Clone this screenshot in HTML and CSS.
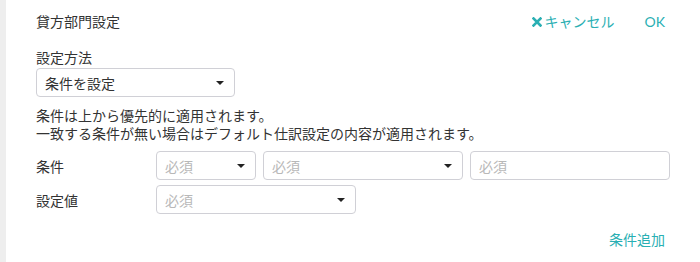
FILE: index.html
```html
<!DOCTYPE html>
<html lang="ja">
<head>
  <meta charset="UTF-8" />
  <title>貸方部門設定</title>
  <link rel="stylesheet" href="styles.css">
</head>
<body>
  <div class="sidebar"></div>
  <div class="panel">
    <div class="header">
      <div class="title">貸方部門設定</div>
      <div class="actions">
        <span class="link cancel">
          <svg width="10" height="10" viewBox="0 0 10 10"><path d="M1.5 1.5L8.5 8.5M8.5 1.5L1.5 8.5" stroke="#2aafb3" stroke-width="2.6" stroke-linecap="square"/></svg>
          キャンセル
        </span>
        <span class="link">OK</span>
      </div>
    </div>

    <div class="field-label">設定方法</div>
    <div class="select wide">
      <span>条件を設定</span>
      <span class="caret"></span>
    </div>

    <div class="note">
      条件は上から優先的に適用されます。<br>
      一致する条件が無い場合はデフォルト仕訳設定の内容が適用されます。
    </div>

    <div class="row">
      <div class="row-label">条件</div>
      <div class="select small placeholder">
        <span>必須</span>
        <span class="caret"></span>
      </div>
      <div class="select medium placeholder">
        <span>必須</span>
        <span class="caret"></span>
      </div>
      <div class="textbox medium placeholder">必須</div>
    </div>

    <div class="row second">
      <div class="row-label">設定値</div>
      <div class="select medium placeholder">
        <span>必須</span>
        <span class="caret"></span>
      </div>
    </div>

    <div class="add-row">
      <span class="link">条件追加</span>
    </div>
  </div>
</body>
</html>
```

FILE: styles.css
```css
* {
  box-sizing: border-box;
}

body {
  margin: 0;
  height: 262px;
  display: flex;
  background-color: #ffffff;
  font-family: Lato, 'Noto Sans CJK JP', sans-serif;
  font-size: 14px;
  color: #333333;
}

.sidebar {
  width: 6px;
  background-color: #eeeeee;
}

.panel {
  flex: 1;
  padding: 12px 30px 0 30px;
}

.header {
  display: flex;
  justify-content: space-between;
  align-items: center;
  line-height: 20px;
  padding-right: 5px;
}

.actions {
  display: flex;
  gap: 30px;
}

.link {
  color: #2aafb3;
  cursor: pointer;
}

.cancel {
  display: flex;
  align-items: center;
  gap: 3px;
}

.field-label {
  margin-top: 17px;
  line-height: 18px;
}

.select,
.textbox {
  height: 29px;
  border: 1px solid #d0d0d6;
  border-radius: 4px;
  padding: 0 10px 0 8px;
  display: flex;
  align-items: center;
  justify-content: space-between;
  background-color: #ffffff;
}

.select.wide {
  width: 199px;
  margin-top: 1px;
}

.select.small {
  width: 100px;
}

.medium {
  width: 200px;
}

.placeholder {
  color: #b8b8b8;
}

.caret {
  width: 0;
  height: 0;
  border-left: 4px solid transparent;
  border-right: 4px solid transparent;
  border-top: 4px solid #222222;
}

.note {
  margin-top: 10px;
  line-height: 18px;
}

.row {
  display: flex;
  align-items: center;
  gap: 7px;
  margin-top: 8px;
}

.row.second {
  margin-top: 5px;
}

.row-label {
  width: 113px;
}

.add-row {
  margin-top: 17px;
  line-height: 18px;
  text-align: right;
  padding-right: 5px;
}
```
